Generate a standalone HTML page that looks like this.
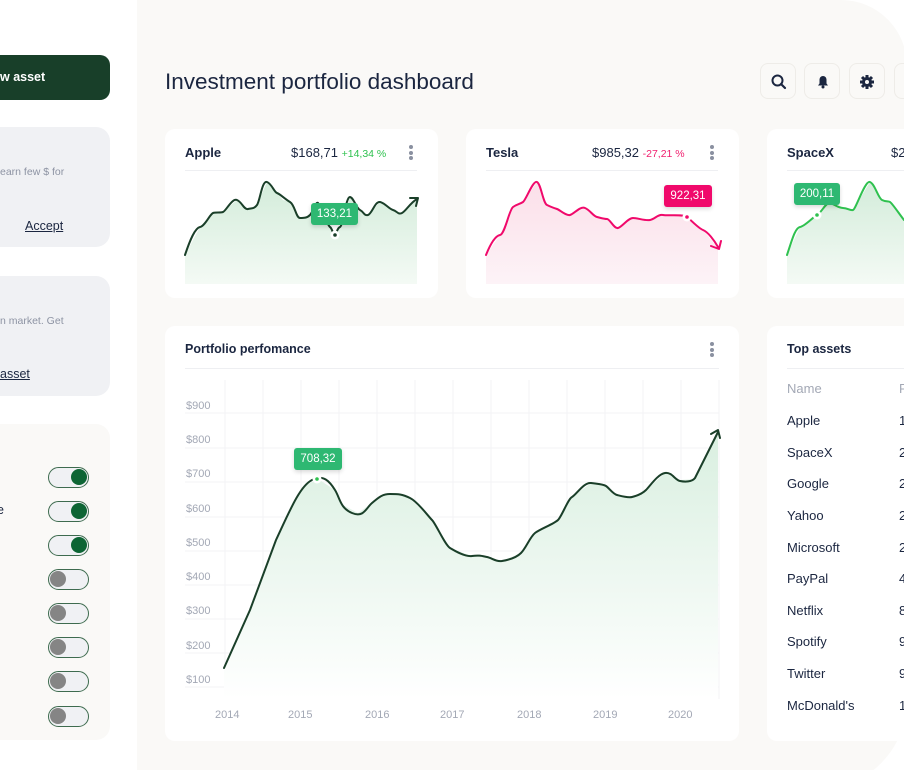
<!DOCTYPE html>
<html><head><meta charset="utf-8"><style>
*{margin:0;padding:0;box-sizing:border-box}
html,body{width:904px;height:770px;overflow:hidden}
body{background:#fff;font-family:"Liberation Sans",sans-serif;color:#1b2640;position:relative}
.abs{position:absolute}
.panel{position:absolute;left:137px;top:0;width:770px;height:790px;background:#faf9f7;border-radius:0 66px 90px 0}
.card{position:absolute;background:#fff;border-radius:10px}
.t{position:absolute;white-space:nowrap}
.dots{position:absolute;width:4px}
.dots i{display:block;width:4px;height:4px;border-radius:2px;background:#8a90a0;margin-bottom:1.5px}
.btn{position:absolute;top:63px;width:36px;height:36px;border:1px solid #eeece8;border-radius:8px;background:#faf9f7}
.tg{position:absolute;left:48px;width:41px;height:21px;border:1.5px solid #3e6b4f;border-radius:11px;background:#f0f1f4}
.tg i{position:absolute;top:1px;width:16px;height:16px;border-radius:8px}
.on i{right:1px;background:#0d6534}
.off i{left:1px;background:#858585}
.tip{position:absolute;color:#fff;font-size:11.5px;text-align:center;line-height:22px;height:22px;border-radius:3px;box-shadow:0 2px 4px rgba(0,0,0,.15)}
.row{position:absolute;left:787px;font-size:13px;color:#1b2640}
.n{position:absolute;left:899px;font-size:13px}
</style></head><body>
<!-- sidebar -->
<div class="abs" style="left:-20px;top:55px;width:130px;height:45px;background:#183f29;border-radius:10px"></div>
<div class="t" style="left:0;top:70px;color:#fff;font-size:12.5px;font-weight:bold">w asset</div>
<div class="abs" style="left:-20px;top:127px;width:130px;height:120px;background:#f0f1f4;border-radius:14px"></div>
<div class="t" style="left:0;top:166px;font-size:10.5px;color:#8d93a3">earn few $ for</div>
<div class="t" style="left:25px;top:219px;font-size:12.5px;text-decoration:underline">Accept</div>
<div class="abs" style="left:-20px;top:276px;width:130px;height:120px;background:#f0f1f4;border-radius:14px"></div>
<div class="t" style="left:0;top:315px;font-size:10.5px;color:#8d93a3">n market. Get</div>
<div class="t" style="left:0;top:367px;font-size:12.5px;text-decoration:underline">asset</div>
<div class="abs" style="left:-20px;top:424px;width:130px;height:316px;background:#faf9f7;border-radius:14px"></div>
<div class="t" style="left:-3px;top:503px;font-size:12.5px">e</div>
<div class="tg on" style="top:467px"><i></i></div>
<div class="tg on" style="top:501px"><i></i></div>
<div class="tg on" style="top:535px"><i></i></div>
<div class="tg off" style="top:569px"><i></i></div>
<div class="tg off" style="top:603px"><i></i></div>
<div class="tg off" style="top:637px"><i></i></div>
<div class="tg off" style="top:671px"><i></i></div>
<div class="tg off" style="top:706px"><i></i></div>

<div class="panel"></div>
<div class="t" style="left:165px;top:69px;font-size:22.5px;color:#1b2640">Investment portfolio dashboard</div>
<div class="btn" style="left:760px"><svg width="36" height="36"><circle cx="16.5" cy="16.5" r="5" fill="none" stroke="#1b2640" stroke-width="2"/><path d="M20 20l4 4" stroke="#1b2640" stroke-width="2.2" stroke-linecap="round"/></svg></div>
<div class="btn" style="left:804px"><svg width="36" height="36"><path d="M13 21.5h10l-1.5-2v-4a3.5 3.5 0 0 0-7 0v4z" fill="#1b2640"/><circle cx="18" cy="23" r="1.5" fill="#1b2640"/></svg></div>
<div class="btn" style="left:849px"><svg width="36" height="36"><g transform="translate(17,18)" fill="#1b2640"><circle r="5"/><g stroke="#1b2640" stroke-width="3"><path d="M0-7V7M-7 0H7M-5-5L5 5M-5 5L5-5"/></g><circle r="2" fill="#faf9f7"/></g></svg></div>
<div class="btn" style="left:894px"></div>

<!-- Apple -->
<div class="card" style="left:165px;top:129px;width:273px;height:169px"></div>
<div class="t" style="left:185px;top:145px;font-size:13px;font-weight:bold">Apple</div>
<div class="t" style="left:291px;top:145px;font-size:13px">$168,71 <span style="color:#2fc14f;font-size:10.5px">+14,34 %</span></div>
<div class="dots" style="left:409px;top:145px"><i></i><i></i><i></i></div>
<div class="abs" style="left:185px;top:170px;width:232px;height:1px;background:#eeeff2"></div>
<!-- Tesla -->
<div class="card" style="left:466px;top:129px;width:273px;height:169px"></div>
<div class="t" style="left:486px;top:145px;font-size:13px;font-weight:bold">Tesla</div>
<div class="t" style="left:592px;top:145px;font-size:13px">$985,32 <span style="color:#f0206f;font-size:10.5px">-27,21 %</span></div>
<div class="dots" style="left:710px;top:145px"><i></i><i></i><i></i></div>
<div class="abs" style="left:486px;top:170px;width:232px;height:1px;background:#eeeff2"></div>
<!-- SpaceX -->
<div class="card" style="left:767px;top:129px;width:200px;height:169px"></div>
<div class="t" style="left:787px;top:145px;font-size:13px;font-weight:bold">SpaceX</div>
<div class="t" style="left:891px;top:145px;font-size:13px">$2</div>
<div class="abs" style="left:787px;top:170px;width:117px;height:1px;background:#eeeff2"></div>

<svg class="abs" style="left:0;top:0" width="904" height="770">
<defs>
<linearGradient id="g" x1="0" y1="0" x2="0" y2="1"><stop offset="0" stop-color="#d3ecda"/><stop offset="1" stop-color="#f4faf5"/></linearGradient>
<linearGradient id="p" x1="0" y1="0" x2="0" y2="1"><stop offset="0" stop-color="#fbdfe9"/><stop offset="1" stop-color="#fdf3f7"/></linearGradient>
<linearGradient id="g2" x1="0" y1="0" x2="0" y2="1"><stop offset="0" stop-color="#d9efe0"/><stop offset="1" stop-color="#ffffff"/></linearGradient>
</defs>
<g fill="none" stroke-linejoin="round" stroke-linecap="round">
<path d="M185 255 L200 227 L213 213 L223 212 L237 200 L248 209 L257 205 L267 182 L277 193 L283 200 L290 202 L300 218 L310 215 L318 203 L330 227 L335 235 L340 227 L350 197 L360 210 L368 215 L380 202 L393 210 L402 213 L417 200 L417 284 L185 284Z" fill="url(#g)" stroke="none"/>
<path d="M185 255 C190 240 195 228 200 227 S210 214 213 213 S220 213 223 212 S232 198 237 200 S244 210 248 209 S254 209 257 205 S262 180 267 182 S274 192 277 193 S285 199 290 202 S296 218 300 218 S307 218 310 215 S316 201 318 203 S327 225 330 227 S333 237 335 235 S337 228 340 227 S346 196 350 197 S356 208 360 210 S364 216 368 215 S375 201 380 202 S389 209 393 210 S398 215 402 213 S410 203 417 199 M410 198 L418 198 L416 206" stroke="#1a3f29" stroke-width="2"/>
<path d="M486 255 L500 235 L513 207 L523 202 L537 182 L547 205 L557 209 L570 215 L585 208 L597 217 L607 219 L618 228 L633 218 L650 220 L663 215 L687 217 L703 230 L718 248 L718 284 L486 284Z" fill="url(#p)" stroke="none"/>
<path d="M486 255 C490 245 495 236 500 235 S509 210 513 207 S520 204 523 202 S533 180 537 182 S543 203 547 205 S554 208 557 209 S566 216 570 215 S580 206 585 208 S593 216 597 217 S604 219 607 219 S614 229 618 228 S628 218 633 218 S645 221 650 220 S658 214 663 215 S683 214 687 217 S698 228 703 230 S714 240 718 247 M711 246 L719 249 L721 241" stroke="#f0096b" stroke-width="2"/>
<path d="M787 255 L800 227 L817 215 L830 203 L843 208 L853 210 L870 182 L882 200 L890 202 L904 220 L904 284 L787 284Z" fill="url(#g)" stroke="none"/>
<path d="M787 255 C792 240 795 228 800 227 S812 218 817 215 S826 202 830 203 S838 208 843 208 S850 211 853 210 S865 180 870 182 S878 198 882 200 S888 201 890 202 S900 215 904 220" stroke="#2fc14f" stroke-width="2"/>
</g>
<circle cx="335" cy="235" r="4.5" fill="#fff"/><circle cx="335" cy="235" r="1.8" fill="#1a3f29"/>
<circle cx="687" cy="217" r="4.5" fill="#fff"/><circle cx="687" cy="217" r="1.8" fill="#f0096b"/>
<circle cx="817" cy="215" r="4.5" fill="#fff"/><circle cx="817" cy="215" r="1.8" fill="#2fc14f"/>
</svg>
<div class="tip" style="left:311px;top:203px;width:47px;background:#2eb872">133,21</div>
<div class="tip" style="left:664px;top:185px;width:48px;background:#f0096b">922,31</div>
<div class="tip" style="left:794px;top:183px;width:46px;background:#2eb872">200,11</div>

<!-- Portfolio -->
<div class="card" style="left:165px;top:326px;width:574px;height:415px"></div>
<div class="t" style="left:185px;top:342px;font-size:12.5px;font-weight:bold">Portfolio perfomance</div>
<div class="dots" style="left:710px;top:342px"><i></i><i></i><i></i></div>
<div class="abs" style="left:185px;top:368px;width:534px;height:1px;background:#eeeff2"></div>
<svg class="abs" style="left:0;top:0" width="904" height="770">
<g stroke="#f3f3f5" stroke-width="1">
<path d="M225 380V699M263 380V699M301 380V699M339 380V699M377 380V699M415 380V699M453 380V699M491 380V699M529 380V699M567 380V699M605 380V699M643 380V699M681 380V699M719 380V699"/>
<path d="M185 413H719M185 448H719M185 482H719M185 517H719M185 551H719M185 585H719M185 619H719M185 653H719M185 687H719"/>
</g>
<path d="M224 668 L250 610 L276 540 L302 487 L318 479 L335 490 L343 505 L358 513 L372 503 L387 494 L406 495 L432 520 L450 548 L472 556 L487 557 L502 561 L521 553 L535 533 L558 520 L572 497 L591 483 L606 486 L617 495 L632 497 L646 490 L665 473 L680 480 L695 479 L718 432 L718 699 L224 699Z" fill="url(#g2)"/>
<path d="M224 668 L250 610 L276 540 C290 510 300 486 312 480 S330 482 335 490 S340 508 352 513 S366 508 372 503 S382 494 390 494 S402 494 410 498 S428 516 432 520 S445 545 450 548 S465 557 472 556 S482 556 487 557 S496 562 502 561 S516 558 521 553 S530 537 535 533 S554 524 558 520 S568 499 572 497 S584 482 591 483 S603 484 606 486 S613 494 617 495 S628 498 632 497 S642 494 646 490 S658 474 665 473 S675 480 680 481 S692 482 695 478 L718 432 M711 434 L718 430 L720 438" fill="none" stroke="#1a3f29" stroke-width="2" stroke-linejoin="round" stroke-linecap="round"/>
<circle cx="317" cy="479" r="4.5" fill="#fff"/><circle cx="317" cy="479" r="1.8" fill="#2fc14f"/>
<g font-family="Liberation Sans" font-size="11" fill="#a3a8b5">
<text x="186" y="409">$900</text><text x="186" y="443">$800</text><text x="186" y="477">$700</text><text x="186" y="512">$600</text><text x="186" y="546">$500</text><text x="186" y="580">$400</text><text x="186" y="614">$300</text><text x="186" y="649">$200</text><text x="186" y="683">$100</text>
<text x="215" y="718">2014</text><text x="288" y="718">2015</text><text x="365" y="718">2016</text><text x="440" y="718">2017</text><text x="517" y="718">2018</text><text x="593" y="718">2019</text><text x="668" y="718">2020</text>
</g>
</svg>
<div class="tip" style="left:294px;top:448px;width:48px;background:#2eb872">708,32</div>

<!-- Top assets -->
<div class="card" style="left:767px;top:326px;width:200px;height:415px"></div>
<div class="t" style="left:787px;top:342px;font-size:12.5px;font-weight:bold">Top assets</div>
<div class="abs" style="left:787px;top:368px;width:117px;height:1px;background:#eeeff2"></div>
<div class="row t" style="top:381px;color:#a3a8b5">Name</div><div class="n t" style="top:381px;color:#a3a8b5">P</div>
<div class="row t" style="top:413px">Apple</div><div class="n t" style="top:413px">1</div>
<div class="row t" style="top:445px">SpaceX</div><div class="n t" style="top:445px">2</div>
<div class="row t" style="top:476px">Google</div><div class="n t" style="top:476px">2</div>
<div class="row t" style="top:508px">Yahoo</div><div class="n t" style="top:508px">2</div>
<div class="row t" style="top:540px">Microsoft</div><div class="n t" style="top:540px">2</div>
<div class="row t" style="top:571px">PayPal</div><div class="n t" style="top:571px">4</div>
<div class="row t" style="top:603px">Netflix</div><div class="n t" style="top:603px">8</div>
<div class="row t" style="top:634px">Spotify</div><div class="n t" style="top:634px">9</div>
<div class="row t" style="top:666px">Twitter</div><div class="n t" style="top:666px">9</div>
<div class="row t" style="top:698px">McDonald's</div><div class="n t" style="top:698px">1</div>
</body></html>
